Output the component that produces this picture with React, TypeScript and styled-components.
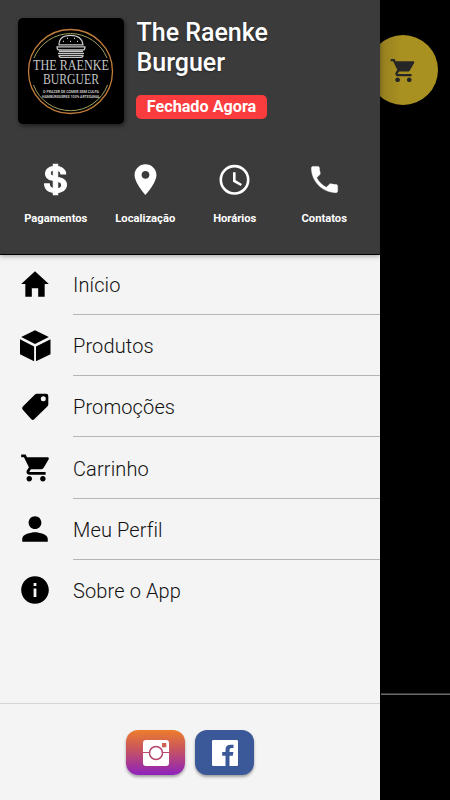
import React from "react";
import styled, { createGlobalStyle } from "styled-components";
import {
  IoMdHome,
  IoMdCart,
  IoMdPerson,
  IoMdInformationCircle,
  IoMdPin,
  IoMdCall,
  IoLogoUsd,
} from "react-icons/io";

const GlobalStyle = createGlobalStyle`
  *, *::before, *::after { box-sizing: border-box; }
  body { margin: 0; background: #000; font-family: Roboto, sans-serif; }
  svg { display: block; }
`;

const Screen = styled.div`
  display: flex;
  width: 450px;
  height: 800px;
  overflow: hidden;
  background: #000;
`;

const Drawer = styled.aside`
  position: relative;
  z-index: 1;
  display: flex;
  flex-direction: column;
  flex: 0 0 380px;
  background: #f4f4f4;
`;

const Header = styled.header`
  flex: 0 0 255px;
  padding: 18px 11px 0;
  background: #3b3b3b;
  border-bottom: 1px solid #000;
  box-shadow: 0 1px 5px rgba(0, 0, 0, 0.35);
`;

const Brand = styled.div`
  display: flex;
  gap: 12px;
  padding-left: 7px;
  height: 106px;
`;

const Logo = styled.div`
  width: 106px;
  height: 106px;
  border-radius: 5px;
  background: #000;
  box-shadow: 1px 2px 4px rgba(0, 0, 0, 0.5);
`;

const BrandText = styled.div`
  display: flex;
  flex-direction: column;
  align-items: flex-start;
`;

const Title = styled.h1`
  margin: 0 0 0 0.5px;
  width: 180px;
  color: #fff;
  font-size: 25px;
  font-weight: 500;
  line-height: 30px;
  text-shadow: 0 1px 2px rgba(0, 0, 0, 0.4);
`;

const Status = styled.span`
  margin-top: 17px;
  width: 131px;
  height: 24px;
  border-radius: 5px;
  background: #fb3c3e;
  color: #fff;
  font-size: 16.2px;
  font-weight: 700;
  line-height: 24px;
  text-align: center;
  white-space: nowrap;
`;

const Shortcuts = styled.nav`
  display: grid;
  grid-template-columns: repeat(4, 1fr);
  margin-top: 38px;
`;

const Shortcut = styled.a<{ $stroke: number }>`
  display: flex;
  flex-direction: column;
  align-items: center;
  gap: 14px;
  color: #fff;
  font-size: 11.2px;
  font-weight: 700;
  line-height: 16px;
  svg { width: 35px; height: 35px; stroke-width: ${(p) => p.$stroke}; }
`;

const Menu = styled.ul`
  flex: 1;
  margin: 0;
  padding: 0;
  list-style: none;
`;

const Item = styled.li`
  display: flex;
  height: 61.2px;
  padding-left: 18px;
  color: #000;
  svg { flex: 0 0 34px; width: 34px; height: 34px; margin-top: 12.5px; }
  &:first-child svg { margin-top: 12px; }
`;

const Label = styled.span<{ $last?: boolean }>`
  flex: 1;
  margin-left: 21px;
  height: 60px;
  line-height: 60px;
  border-bottom: 1px solid ${(p) => (p.$last ? "transparent" : "#b5b5b5")};
  color: #111;
  font-size: 20px;
  font-weight: 300;
  letter-spacing: 0.12px;
`;

const Footer = styled.footer`
  display: flex;
  justify-content: center;
  gap: 10px;
  flex: 0 0 97px;
  padding-top: 26px;
  border-top: 1px solid #d5d5d5;
`;

const Social = styled.a<{ $bg: string }>`
  display: flex;
  align-items: center;
  justify-content: center;
  width: 59px;
  height: 45px;
  border-radius: 12px;
  background: ${(p) => p.$bg};
  box-shadow: 0 2px 3px rgba(0, 0, 0, 0.35);
`;

const Backdrop = styled.main`
  display: flex;
  flex-direction: column;
  justify-content: space-between;
  flex: 1;
  padding: 35px 0 105px;
`;

const CartButton = styled.button`
  display: flex;
  align-items: center;
  justify-content: center;
  width: 70px;
  height: 70px;
  margin-left: -12px;
  padding: 0 2px 0 0;
  border: 0;
  border-radius: 50%;
  background: linear-gradient(90deg, #968020 17%, #a89021 48%);
  color: #262626;
  svg { width: 29px; height: 29px; }
`;

const Rule = styled.div`
  height: 2px;
  margin-left: 1px;
  background: linear-gradient(#383838 50%, #686868 50%);
`;

const BurgerLogo = () => (
  <svg width="106" height="106" viewBox="0 0 106 106">
    <g fill="none">
      <circle cx="52.5" cy="53.5" r="42" stroke="#c17c3c" strokeWidth="1.3" />
      <path d="M16 40 A39.5 39.5 0 0 1 89 40M15.5 67 A39.5 39.5 0 0 0 89.5 67" stroke="#a0a060" />
      <g stroke="#c8c8c8" strokeWidth="1.2" transform="translate(0 -.6)">
        <path d="M41 27.5Q41 18 52.5 18T65 27.5Z" />
        <path d="M39 29.5h28q0 3-2 3H41q-2 0-2-3ZM41 34h24M40 36h26M41 38h24q0 2-3 2H44q-3 0-3-2Z" />
        <path d="M45 24h1M49 21h1M52 24h1M56 21h1M59 24h1" />
      </g>
    </g>
    <g fill="#c4c4c4" textAnchor="middle">
      <g fontFamily="'Liberation Serif', serif">
        <text x="53" y="51.5" fontSize="14.5" textLength="76" lengthAdjust="spacingAndGlyphs">THE RAENKE</text>
        <text x="53" y="65.5" fontSize="14.5" textLength="56" lengthAdjust="spacingAndGlyphs">BURGUER</text>
      </g>
      <g fontFamily="Roboto, sans-serif" fontSize="3.8" fontWeight="700">
        <text x="53" y="74.5" textLength="56" lengthAdjust="spacingAndGlyphs">O PRAZER DE COMER SEM CULPA</text>
        <text x="53" y="80" textLength="58" lengthAdjust="spacingAndGlyphs">HAMBÚRGUERES 100% ARTESANAL</text>
      </g>
    </g>
  </svg>
);

const Clock = () => (
  <svg viewBox="0 0 35 35" fill="none" stroke="#fff">
    <circle cx="17.5" cy="17.8" r="13.7" />
    <path d="M17.3 10.3v8.6l7 4.1" />
  </svg>
);

const Cube = () => (
  <svg viewBox="0 0 34 34" fill="currentColor">
    <path d="M17 1.2 30.8 8 17 15 3.2 8ZM2 10.2 16.1 17.4V32.2L2 25.2ZM32.5 10.2 18 17.4V32.2L32.5 25.2Z" />
  </svg>
);

const Tag = () => (
  <svg viewBox="0 0 34 34" fill="currentColor">
    <path
      fillRule="evenodd"
      d="M18.8 3.8H28Q30.3 3.8 30.3 6V14.2Q30.3 15.6 29.3 16.5L16.2 29.2Q14.7 30.6 13.3 29.2L4.6 19.5Q3.4 18 4.9 16.6L16.7 4.7Q17.6 3.8 18.8 3.8ZM25.3 6.3a2.5 2.5 0 1 0 0 5 2.5 2.5 0 0 0 0-5Z"
    />
  </svg>
);

const Instagram = () => (
  <svg width="26" height="26" viewBox="0 0 26 26">
    <rect width="26" height="26" rx="3" fill="#fff" />
    <path d="M0 12.5h6.5M19.5 12.5H26" stroke="#b74a70" strokeWidth="1.2" />
    <circle cx="13" cy="13" r="6.5" fill="none" stroke="#b4476e" strokeWidth="1.5" />
    <rect x="19" y="3" width="4.3" height="4.3" fill="#cf6351" />
  </svg>
);

const Facebook = () => (
  <svg width="26" height="26" viewBox="0 0 26 26">
    <path
      fill="#fff"
      d="M1.3 0h23.4Q26 0 26 1.3v23.4Q26 26 24.7 26H17.5V15.8h3.3l.6-3.8h-3.9V10q0-1.9 2-1.9h2V4.7h-3q-5 0-5 5V12h-3.3v3.8h3.3V26H1.3Q0 26 0 24.7V1.3Q0 0 1.3 0Z"
    />
  </svg>
);

const shortcuts = [
  { label: "Pagamentos", Icon: IoLogoUsd, stroke: 16 },
  { label: "Localização", Icon: IoMdPin, stroke: 0 },
  { label: "Horários", Icon: Clock, stroke: 2.6 },
  { label: "Contatos", Icon: IoMdCall, stroke: 6 },
];

const items = [
  { label: "Início", Icon: IoMdHome },
  { label: "Produtos", Icon: Cube },
  { label: "Promoções", Icon: Tag },
  { label: "Carrinho", Icon: IoMdCart },
  { label: "Meu Perfil", Icon: IoMdPerson },
  { label: "Sobre o App", Icon: IoMdInformationCircle },
];

export default function App() {
  return (
    <>
      <GlobalStyle />
      <Screen>
        <Drawer>
          <Header>
            <Brand>
              <Logo>
                <BurgerLogo />
              </Logo>
              <BrandText>
                <Title>The Raenke Burguer</Title>
                <Status>Fechado Agora</Status>
              </BrandText>
            </Brand>
            <Shortcuts>
              {shortcuts.map(({ label, Icon, stroke }) => (
                <Shortcut key={label} $stroke={stroke}>
                  <Icon />
                  {label}
                </Shortcut>
              ))}
            </Shortcuts>
          </Header>
          <Menu>
            {items.map(({ label, Icon }, i) => (
              <Item key={label}>
                <Icon />
                <Label $last={i === items.length - 1}>{label}</Label>
              </Item>
            ))}
          </Menu>
          <Footer>
            <Social $bg="linear-gradient(#ed7d2c, #c65362 45%, #8d22bd)" aria-label="Instagram">
              <Instagram />
            </Social>
            <Social $bg="#3b5998" aria-label="Facebook">
              <Facebook />
            </Social>
          </Footer>
        </Drawer>
        <Backdrop>
          <CartButton aria-label="Carrinho">
            <IoMdCart />
          </CartButton>
          <Rule />
        </Backdrop>
      </Screen>
    </>
  );
}
